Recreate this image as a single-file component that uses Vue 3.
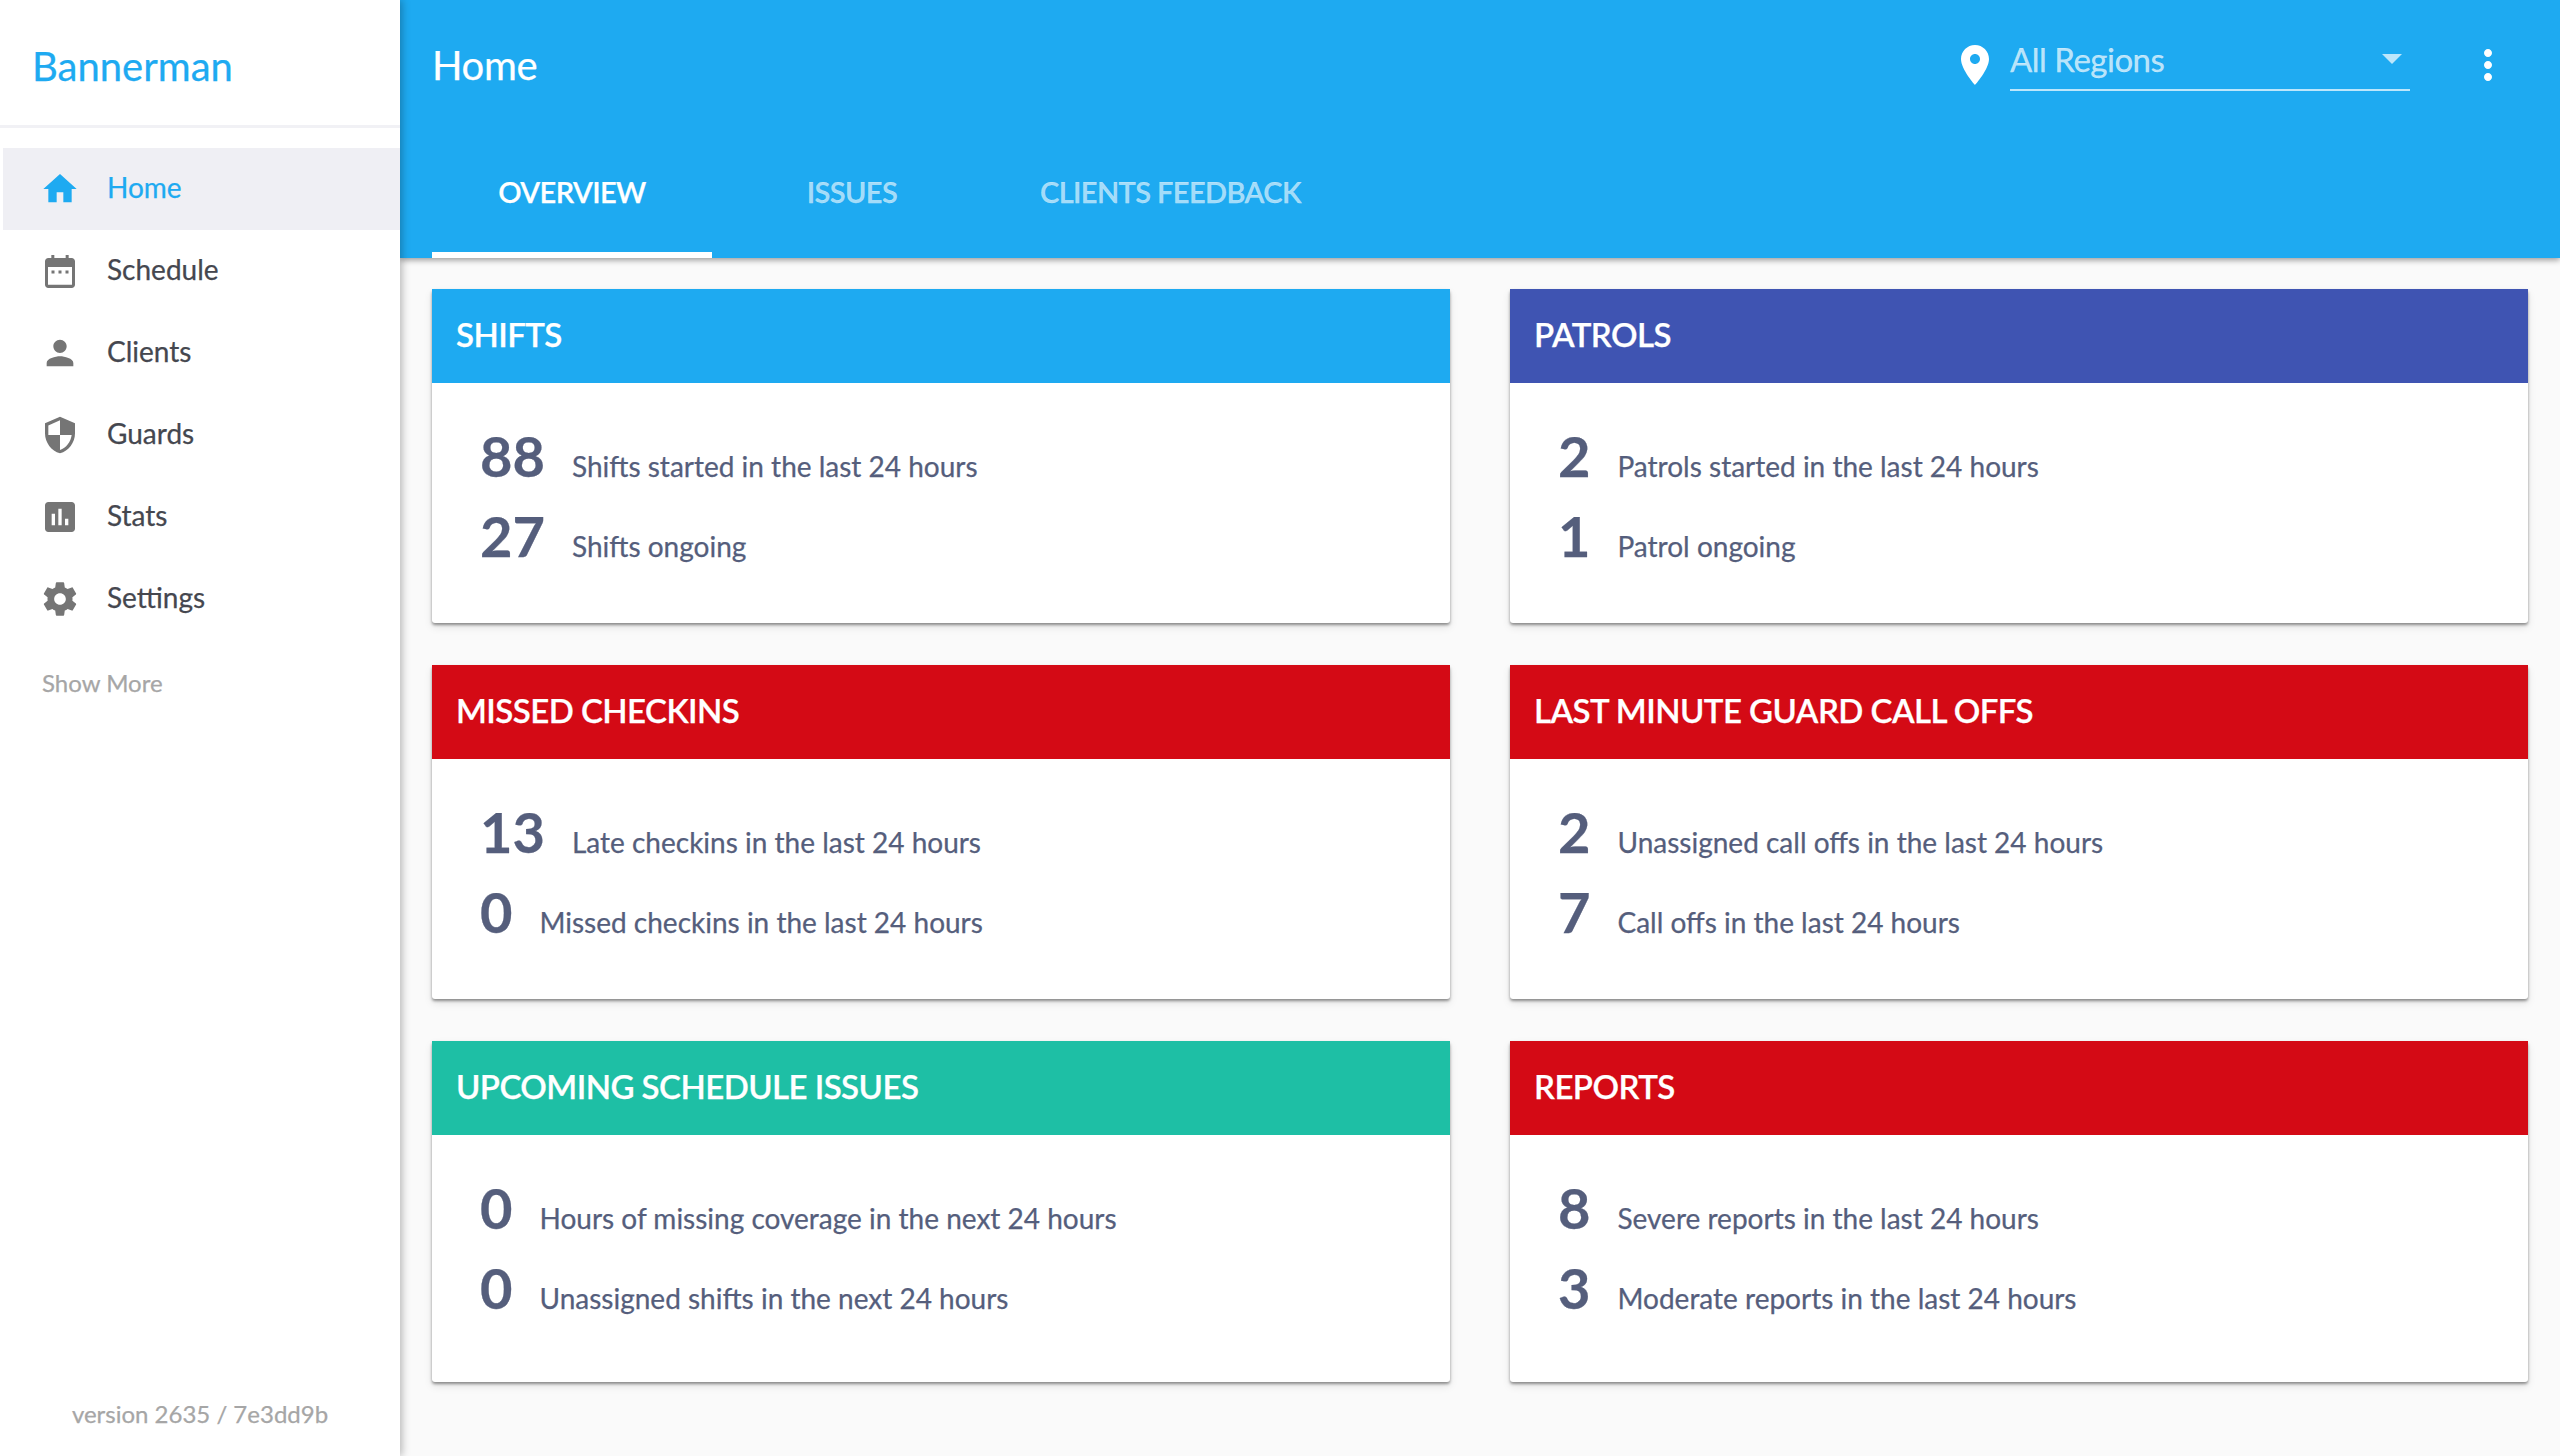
<template>
  <div class="layout">
    <aside class="sidebar">
      <div class="brand">Bannerman</div>
      <nav class="nav">
        <a v-for="item in navItems" :key="item.label" :class="['nav-item', { active: item.active }]">
          <svg class="nav-icon" viewBox="0 0 24 24"><path :d="item.icon" fill-rule="evenodd"></path></svg>
          <span class="nav-label">{{ item.label }}</span>
        </a>
      </nav>
      <div class="show-more">Show More</div>
      <div class="version">version 2635 / 7e3dd9b</div>
    </aside>

    <div class="content">
      <header class="appbar">
        <div class="toolbar">
          <div class="page-title">Home</div>
          <svg class="bar-icon pin" viewBox="0 0 24 24"><path d="M12 2C8.13 2 5 5.13 5 9c0 5.25 7 13 7 13s7-7.75 7-13c0-3.87-3.13-7-7-7zm0 9.5c-1.38 0-2.5-1.12-2.5-2.5s1.12-2.5 2.5-2.5 2.5 1.12 2.5 2.5-1.12 2.5-2.5 2.5z"></path></svg>
          <div class="region-select">
            <span class="region-label">All Regions</span>
            <svg class="bar-icon caret" viewBox="0 0 24 24"><path d="M7 10l5 5 5-5z"></path></svg>
          </div>
          <svg class="bar-icon more" viewBox="0 0 24 24"><path d="M12 8c1.1 0 2-.9 2-2s-.9-2-2-2-2 .9-2 2 .9 2 2 2zm0 2c-1.1 0-2 .9-2 2s.9 2 2 2 2-.9 2-2-.9-2-2-2zm0 6c-1.1 0-2 .9-2 2s.9 2 2 2 2-.9 2-2-.9-2-2-2z"></path></svg>
        </div>
        <div class="tabs">
          <div v-for="tab in tabs" :key="tab.label" :class="['tab', { active: tab.active }]">{{ tab.label }}</div>
        </div>
      </header>

      <main class="cards">
        <section v-for="card in cards" :key="card.title" class="card">
          <div class="card-head" :style="{ background: card.color }">{{ card.title }}</div>
          <div class="card-body">
            <div v-for="row in card.rows" :key="row.text" class="stat">
              <span class="stat-num">{{ row.num }}</span>
              <span class="stat-text">{{ row.text }}</span>
            </div>
          </div>
        </section>
      </main>
    </div>
  </div>
</template>

<script setup>
const navItems = [
  { label: 'Home', active: true, icon: 'M10 20v-6h4v6h5v-8h3L12 3 2 12h3v8z' },
  { label: 'Schedule', icon: 'M6.8 2.4h1.8v1.8h6.8V2.4h1.8v1.8H19c1.1 0 2 .9 2 2v14c0 1.1-.9 2-2 2H5c-1.1 0-2-.9-2-2v-14c0-1.1.9-2 2-2h1.8V2.4zM4.8 9.6v10.6h14.4V9.6H4.8zM6.9 11.7h1.8v1.8H6.9zM11.1 11.7h1.8v1.8h-1.8zM15.3 11.7h1.8v1.8h-1.8z' },
  { label: 'Clients', icon: 'M12 12c2.21 0 4-1.79 4-4s-1.79-4-4-4-4 1.79-4 4 1.79 4 4 4zm0 2c-2.67 0-8 1.34-8 4v2h16v-2c0-2.66-5.33-4-8-4z' },
  { label: 'Guards', icon: 'M12 1L3 5v6c0 5.55 3.84 10.74 9 12 5.16-1.26 9-6.45 9-12V5l-9-4zm0 10.99h7c-.53 4.12-3.28 7.79-7 8.94V12H5V6.3l7-3.11v8.8z' },
  { label: 'Stats', icon: 'M19 3H5c-1.1 0-2 .9-2 2v14c0 1.1.9 2 2 2h14c1.1 0 2-.9 2-2V5c0-1.1-.9-2-2-2zM9 17H7v-7h2v7zm4 0h-2V7h2v10zm4 0h-2v-4h2v4z' },
  { label: 'Settings', icon: 'M19.43 12.98c.04-.32.07-.64.07-.98s-.03-.66-.07-.98l2.11-1.65c.19-.15.24-.42.12-.64l-2-3.46c-.12-.22-.39-.3-.61-.22l-2.49 1c-.52-.4-1.08-.73-1.69-.98l-.38-2.65C14.46 2.18 14.25 2 14 2h-4c-.25 0-.46.18-.49.42l-.38 2.65c-.61.25-1.17.59-1.69.98l-2.49-1c-.23-.09-.49 0-.61.22l-2 3.46c-.13.22-.07.49.12.64l2.11 1.65c-.04.32-.07.65-.07.98s.03.66.07.98l-2.11 1.65c-.19.15-.24.42-.12.64l2 3.46c.12.22.39.3.61.22l2.49-1c.52.4 1.08.73 1.69.98l.38 2.65c.03.24.24.42.49.42h4c.25 0 .46-.18.49-.42l.38-2.65c.61-.25 1.17-.59 1.69-.98l2.49 1c.23.09.49 0 .61-.22l2-3.46c.12-.22.07-.49-.12-.64l-2.11-1.65zM12 15.5c-1.93 0-3.5-1.57-3.5-3.5s1.57-3.5 3.5-3.5 3.5 1.57 3.5 3.5-1.57 3.5-3.5 3.5z' }
]

const tabs = [
  { label: 'OVERVIEW', active: true },
  { label: 'ISSUES' },
  { label: 'CLIENTS FEEDBACK' }
]

const blue = '#1eaaf1'
const red = '#d40a15'

const cards = [
  { title: 'SHIFTS', color: blue, rows: [
    { num: 88, text: 'Shifts started in the last 24 hours' },
    { num: 27, text: 'Shifts ongoing' }
  ] },
  { title: 'PATROLS', color: '#3f54b2', rows: [
    { num: 2, text: 'Patrols started in the last 24 hours' },
    { num: 1, text: 'Patrol ongoing' }
  ] },
  { title: 'MISSED CHECKINS', color: red, rows: [
    { num: 13, text: 'Late checkins in the last 24 hours' },
    { num: 0, text: 'Missed checkins in the last 24 hours' }
  ] },
  { title: 'LAST MINUTE GUARD CALL OFFS', color: red, rows: [
    { num: 2, text: 'Unassigned call offs in the last 24 hours' },
    { num: 7, text: 'Call offs in the last 24 hours' }
  ] },
  { title: 'UPCOMING SCHEDULE ISSUES', color: '#1ebfa5', rows: [
    { num: 0, text: 'Hours of missing coverage in the next 24 hours' },
    { num: 0, text: 'Unassigned shifts in the next 24 hours' }
  ] },
  { title: 'REPORTS', color: red, rows: [
    { num: 8, text: 'Severe reports in the last 24 hours' },
    { num: 3, text: 'Moderate reports in the last 24 hours' }
  ] }
]
</script>

<style scoped>
.layout {
  display: flex;
  height: 1456px;
  overflow: hidden;
  background: #fafafa;
  font-family: Lato, "Liberation Sans", sans-serif;
  -webkit-text-stroke: 0.25px;
}

.sidebar {
  width: 400px;
  flex-shrink: 0;
  display: flex;
  flex-direction: column;
  background: #fff;
  box-shadow: 2px 0 8px rgba(0, 0, 0, 0.28);
  position: relative;
  z-index: 2;
}
.brand {
  height: 119px;
  padding: 6px 0 0 32px;
  display: flex;
  align-items: center;
  font-size: 40px;
  color: #1eaaf1;
  border-bottom: 3px solid #f1f1f5;
}
.nav { padding: 20px 0 0 3px; }
.nav-item {
  display: flex;
  align-items: center;
  height: 82px;
  padding-left: 37px;
  font-size: 28px;
  color: #45474f;
}
.nav-item.active { background: #efeff4; color: #1eaaf1; }
.nav-icon { width: 40px; height: 40px; margin-right: 27px; fill: #757575; flex-shrink: 0; }
.nav-item.active .nav-icon { fill: #1eaaf1; }
.nav-label { padding-bottom: 5px; }
.show-more { padding: 28px 0 0 42px; font-size: 24px; color: #a6a6a6; }
.version {
  margin-top: auto;
  padding-bottom: 28px;
  text-align: center;
  font-size: 24px;
  color: #a6a6a6;
}

.content { flex: 1; min-width: 0; display: flex; flex-direction: column; }

.appbar {
  height: 258px;
  background: #1eaaf1;
  box-shadow: 0 2px 6px rgba(0, 0, 0, 0.4);
  position: relative;
  z-index: 1;
}
.toolbar { height: 130px; display: flex; align-items: center; padding-left: 32px; }
.page-title { flex: 1; font-size: 40px; letter-spacing: -0.3px; color: #fff; }
.bar-icon { width: 48px; height: 48px; fill: #fff; flex-shrink: 0; }
.region-select {
  width: 400px;
  height: 54px;
  margin: -4px 0 0 11px;
  display: flex;
  align-items: center;
  justify-content: space-between;
  font-size: 33px;
  color: rgba(255, 255, 255, 0.7);
  border-bottom: 2px solid rgba(255, 255, 255, 0.7);
}
.region-label { margin-bottom: 6px; letter-spacing: -0.5px; }
.caret { fill: rgba(255, 255, 255, 0.7); margin-right: -6px; margin-top: -8px; }
.more { margin: 0 48px 0 54px; }

.tabs { height: 128px; display: flex; padding-left: 32px; }
.tab {
  min-width: 280px;
  padding: 0 48px 6px;
  box-sizing: border-box;
  display: flex;
  align-items: center;
  justify-content: center;
  font-size: 29px;
  font-weight: 600;
  letter-spacing: -0.6px;
  color: rgba(255, 255, 255, 0.6);
}
.tab.active { color: #fff; border-bottom: 6px solid #fff; padding-bottom: 0; }

.cards {
  flex: 1;
  display: grid;
  grid-template-columns: 1018px 1018px;
  grid-template-rows: 334px 334px 341px;
  gap: 42px 60px;
  padding: 31px 32px 0;
}
.card {
  background: #fff;
  border-radius: 3px;
  box-shadow: 0 2px 3px rgba(0, 0, 0, 0.4), 0 4px 8px rgba(0, 0, 0, 0.1);
}
.card-head {
  height: 94px;
  padding: 0 0 4px 24px;
  box-sizing: border-box;
  display: flex;
  align-items: center;
  font-size: 33px;
  font-weight: 600;
  letter-spacing: -0.55px;
  color: #fff;
}
.card-body { padding: 39px 48px 0; }
.stat { display: flex; align-items: baseline; height: 80px; color: #555e7c; }
.stat-num { font-size: 56px; font-weight: 700; margin-right: 27px; }
.stat-text { font-size: 28px; }
</style>

<style>
html, body { margin: 0; background: #fafafa; }
</style>
